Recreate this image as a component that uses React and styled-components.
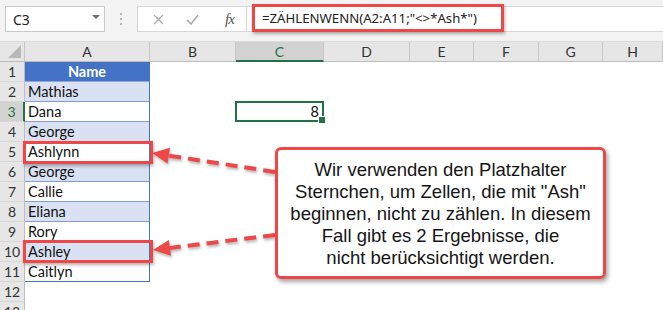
import React from 'react'
import styled, { createGlobalStyle } from 'styled-components'

const GlobalStyle = createGlobalStyle`
html, body {
    margin: 0;
    padding: 0;
    background: #ffffff;
}
* {
    box-sizing: border-box;
}
`

const RED = '#ee4747'
const GREEN = '#217346'

const names = ['Mathias', 'Dana', 'George', 'Ashlynn', 'George', 'Callie', 'Eliana', 'Rory', 'Ashley', 'Caitlyn']
const columns = ['A', 'B', 'C', 'D', 'E', 'F', 'G', 'H']

const Page = styled.div`
position: relative;
width: 663px;
height: 310px;
overflow: hidden;
display: flex;
flex-direction: column;
font-family: Lato, "Open Sans", sans-serif;
`

const TopBar = styled.div`
height: 42px;
flex: none;
display: flex;
align-items: flex-start;
padding: 6px 0 0 5px;
background: #f3f3f3;
border-bottom: 1px solid #dadada;
`

const NameBox = styled.div`
width: 100px;
height: 26px;
background: #fff;
border: 1px solid #c8c8c8;
display: flex;
align-items: center;
justify-content: space-between;
padding: 0 4px 0 7px;
font-family: "Noto Sans", sans-serif;
font-size: 14px;
color: #222;
`

const Caret = styled.span`
width: 0;
height: 0;
border-left: 4px solid transparent;
border-right: 4px solid transparent;
border-top: 4px solid #707070;
margin-top: -4px;
`

const Grip = styled.div`
width: 32px;
height: 26px;
display: flex;
flex-direction: column;
align-items: center;
justify-content: center;
gap: 3px;
span {
    width: 2px;
    height: 2px;
    background: #b4b4b4;
}
`

const ButtonBox = styled.div`
width: 109px;
height: 26px;
background: #fff;
border: 1px solid #d6d6d6;
border-right: none;
display: flex;
align-items: center;
padding-left: 15px;
gap: 22px;
`

const FxLabel = styled.span`
font-family: "Liberation Serif", serif;
font-style: italic;
font-size: 15px;
color: #555;
margin-left: 4px;
letter-spacing: -1px;
`

const FormulaInput = styled.div`
flex: 1;
height: 26px;
background: #fff;
border: 1px solid #d6d6d6;
border-right: none;
display: flex;
align-items: center;
padding-left: 5px;
`

const FormulaText = styled.span`
height: 28px;
margin-top: -2px;
width: 252px;
display: flex;
align-items: center;
padding-left: 7px;
border: 3px solid ${RED};
box-shadow: 1px 2px 3px rgba(0, 0, 0, 0.3);
font-family: "Noto Sans", sans-serif;
font-size: 13.2px;
color: #222;
white-space: nowrap;
`

const Sheet = styled.div`
display: grid;
grid-template-columns: 25px 125px 86px 88px 86px 64px 65px 64px 1fr;
grid-auto-rows: 20px;
background: #fff;
`

const Corner = styled.div`
background: #e6e6e6;
border-right: 1px solid #c6c6c6;
border-bottom: 1px solid #bdbdbd;
position: relative;
&::after {
    content: '';
    position: absolute;
    right: 3px;
    bottom: 3px;
    border-left: 13px solid transparent;
    border-bottom: 13px solid #b9b9b9;
}
`

const ColHeader = styled.div`
background: ${p => (p.$selected ? '#d2d2d2' : '#e6e6e6')};
color: ${p => (p.$selected ? GREEN : '#333')};
border-right: 1px solid #c6c6c6;
border-bottom: ${p => (p.$selected ? `2px solid ${GREEN}` : '1px solid #bdbdbd')};
display: flex;
align-items: center;
justify-content: center;
font-size: 14px;
`

const RowHeader = styled.div`
background: ${p => (p.$selected ? '#d2d2d2' : '#e6e6e6')};
color: ${p => (p.$selected ? GREEN : '#333')};
border-right: ${p => (p.$selected ? `2px solid ${GREEN}` : '1px solid #bdbdbd')};
border-bottom: 1px solid #d6d6d6;
display: flex;
align-items: center;
justify-content: center;
font-size: 14px;
`

const Cell = styled.div`
position: relative;
display: flex;
align-items: center;
padding: 0 3px;
font-size: 14.5px;
color: #111;
white-space: nowrap;
${p => p.$variant === 'head' && `
    background: #4472c4;
    color: #fff;
    font-weight: 700;
    justify-content: center;
    border-right: 1px solid #4472c4;
    border-bottom: 1px solid #8eaadb;
`}
${p => p.$variant === 'band' && `
    background: #d9e1f2;
    border-right: 1px solid #4472c4;
    border-bottom: 1px solid #7f9fd6;
`}
${p => p.$variant === 'plain' && `
    background: #fff;
    border-right: 1px solid #4472c4;
    border-bottom: 1px solid #7f9fd6;
`}
${p => p.$last && `
    border-bottom: 1px solid #4472c4;
`}
${p => p.$active && `
    justify-content: flex-end;
    border: 2px solid ${GREEN};
    margin: -1px 0 0 -1px;
    width: calc(100% + 1px);
    height: calc(100% + 1px);
    &::after {
        content: '';
        position: absolute;
        right: -4px;
        bottom: -4px;
        width: 6px;
        height: 6px;
        background: ${GREEN};
        border: 1px solid #fff;
    }
`}
`

const Highlight = styled.div`
position: absolute;
left: 23px;
width: 130px;
height: 23px;
border: 3px solid ${RED};
box-shadow: 1px 2px 3px rgba(0, 0, 0, 0.3);
`

const Callout = styled.div`
position: absolute;
left: 275px;
top: 147px;
width: 331px;
height: 132px;
background: #fff;
border: 3px solid ${RED};
border-radius: 6px;
box-shadow: 2px 3px 4px rgba(0, 0, 0, 0.35);
padding-top: 9px;
text-align: center;
font-family: "Liberation Sans", Arial, sans-serif;
font-size: 18.5px;
line-height: 22px;
color: #151515;
`

const Arrows = styled.svg`
position: absolute;
left: 0;
top: 0;
pointer-events: none;
filter: drop-shadow(1px 2px 1.5px rgba(0, 0, 0, 0.3));
`

const XIcon = () => (
    <svg width="11" height="11" viewBox="0 0 11 11">
        <path d="M1 1 L10 10 M10 1 L1 10" stroke="#a8a8a8" strokeWidth="1.3" fill="none" />
    </svg>
)

const CheckIcon = () => (
    <svg width="13" height="11" viewBox="0 0 13 11">
        <path d="M1 6 L5 10 L12 1" stroke="#a8a8a8" strokeWidth="1.5" fill="none" />
    </svg>
)

const arrows = [
    { line: 'M275 172 L168.8 155.6', head: '152,153 170,147.7 167.6,163.5' },
    { line: 'M275 235 L169.9 247.9', head: '153,250 168.9,240 170.9,255.8' },
]

function cellVariant(row) {
    if (row === 1) return 'head'
    if (row > 11) return null
    return row % 2 === 0 ? 'band' : 'plain'
}

const App = () => {
    const rows = Array.from({ length: 13 }, (_, i) => i + 1)
    return (
        <Page>
            <GlobalStyle />
            <TopBar>
                <NameBox>
                    C3
                    <Caret />
                </NameBox>
                <Grip>
                    <span />
                    <span />
                    <span />
                </Grip>
                <ButtonBox>
                    <XIcon />
                    <CheckIcon />
                    <FxLabel>fx</FxLabel>
                </ButtonBox>
                <FormulaInput>
                    <FormulaText>=ZÄHLENWENN(A2:A11;"&lt;&gt;*Ash*")</FormulaText>
                </FormulaInput>
            </TopBar>
            <Sheet>
                <Corner />
                {columns.map(c => (
                    <ColHeader key={c} $selected={c === 'C'}>{c}</ColHeader>
                ))}
                {rows.map(r => (
                    <React.Fragment key={r}>
                        <RowHeader $selected={r === 3}>{r}</RowHeader>
                        <Cell $variant={cellVariant(r)} $last={r === 11}>
                            {r === 1 ? 'Name' : names[r - 2]}
                        </Cell>
                        <Cell />
                        <Cell $active={r === 3}>{r === 3 ? '8' : ''}</Cell>
                        <Cell />
                        <Cell />
                        <Cell />
                        <Cell />
                        <Cell />
                    </React.Fragment>
                ))}
            </Sheet>
            <Highlight style={{ top: 141 }} />
            <Highlight style={{ top: 240 }} />
            <Arrows width="663" height="310">
                {arrows.map((a, i) => (
                    <g key={i}>
                        <path d={a.line} stroke={RED} strokeWidth="4" strokeDasharray="12 7" fill="none" />
                        <polygon points={a.head} fill={RED} />
                    </g>
                ))}
            </Arrows>
            <Callout>
                Wir verwenden den Platzhalter<br />
                Sternchen, um Zellen, die mit "Ash"<br />
                beginnen, nicht zu zählen. In diesem<br />
                Fall gibt es 2 Ergebnisse, die<br />
                nicht berücksichtigt werden.
            </Callout>
        </Page>
    )
}

export default App
